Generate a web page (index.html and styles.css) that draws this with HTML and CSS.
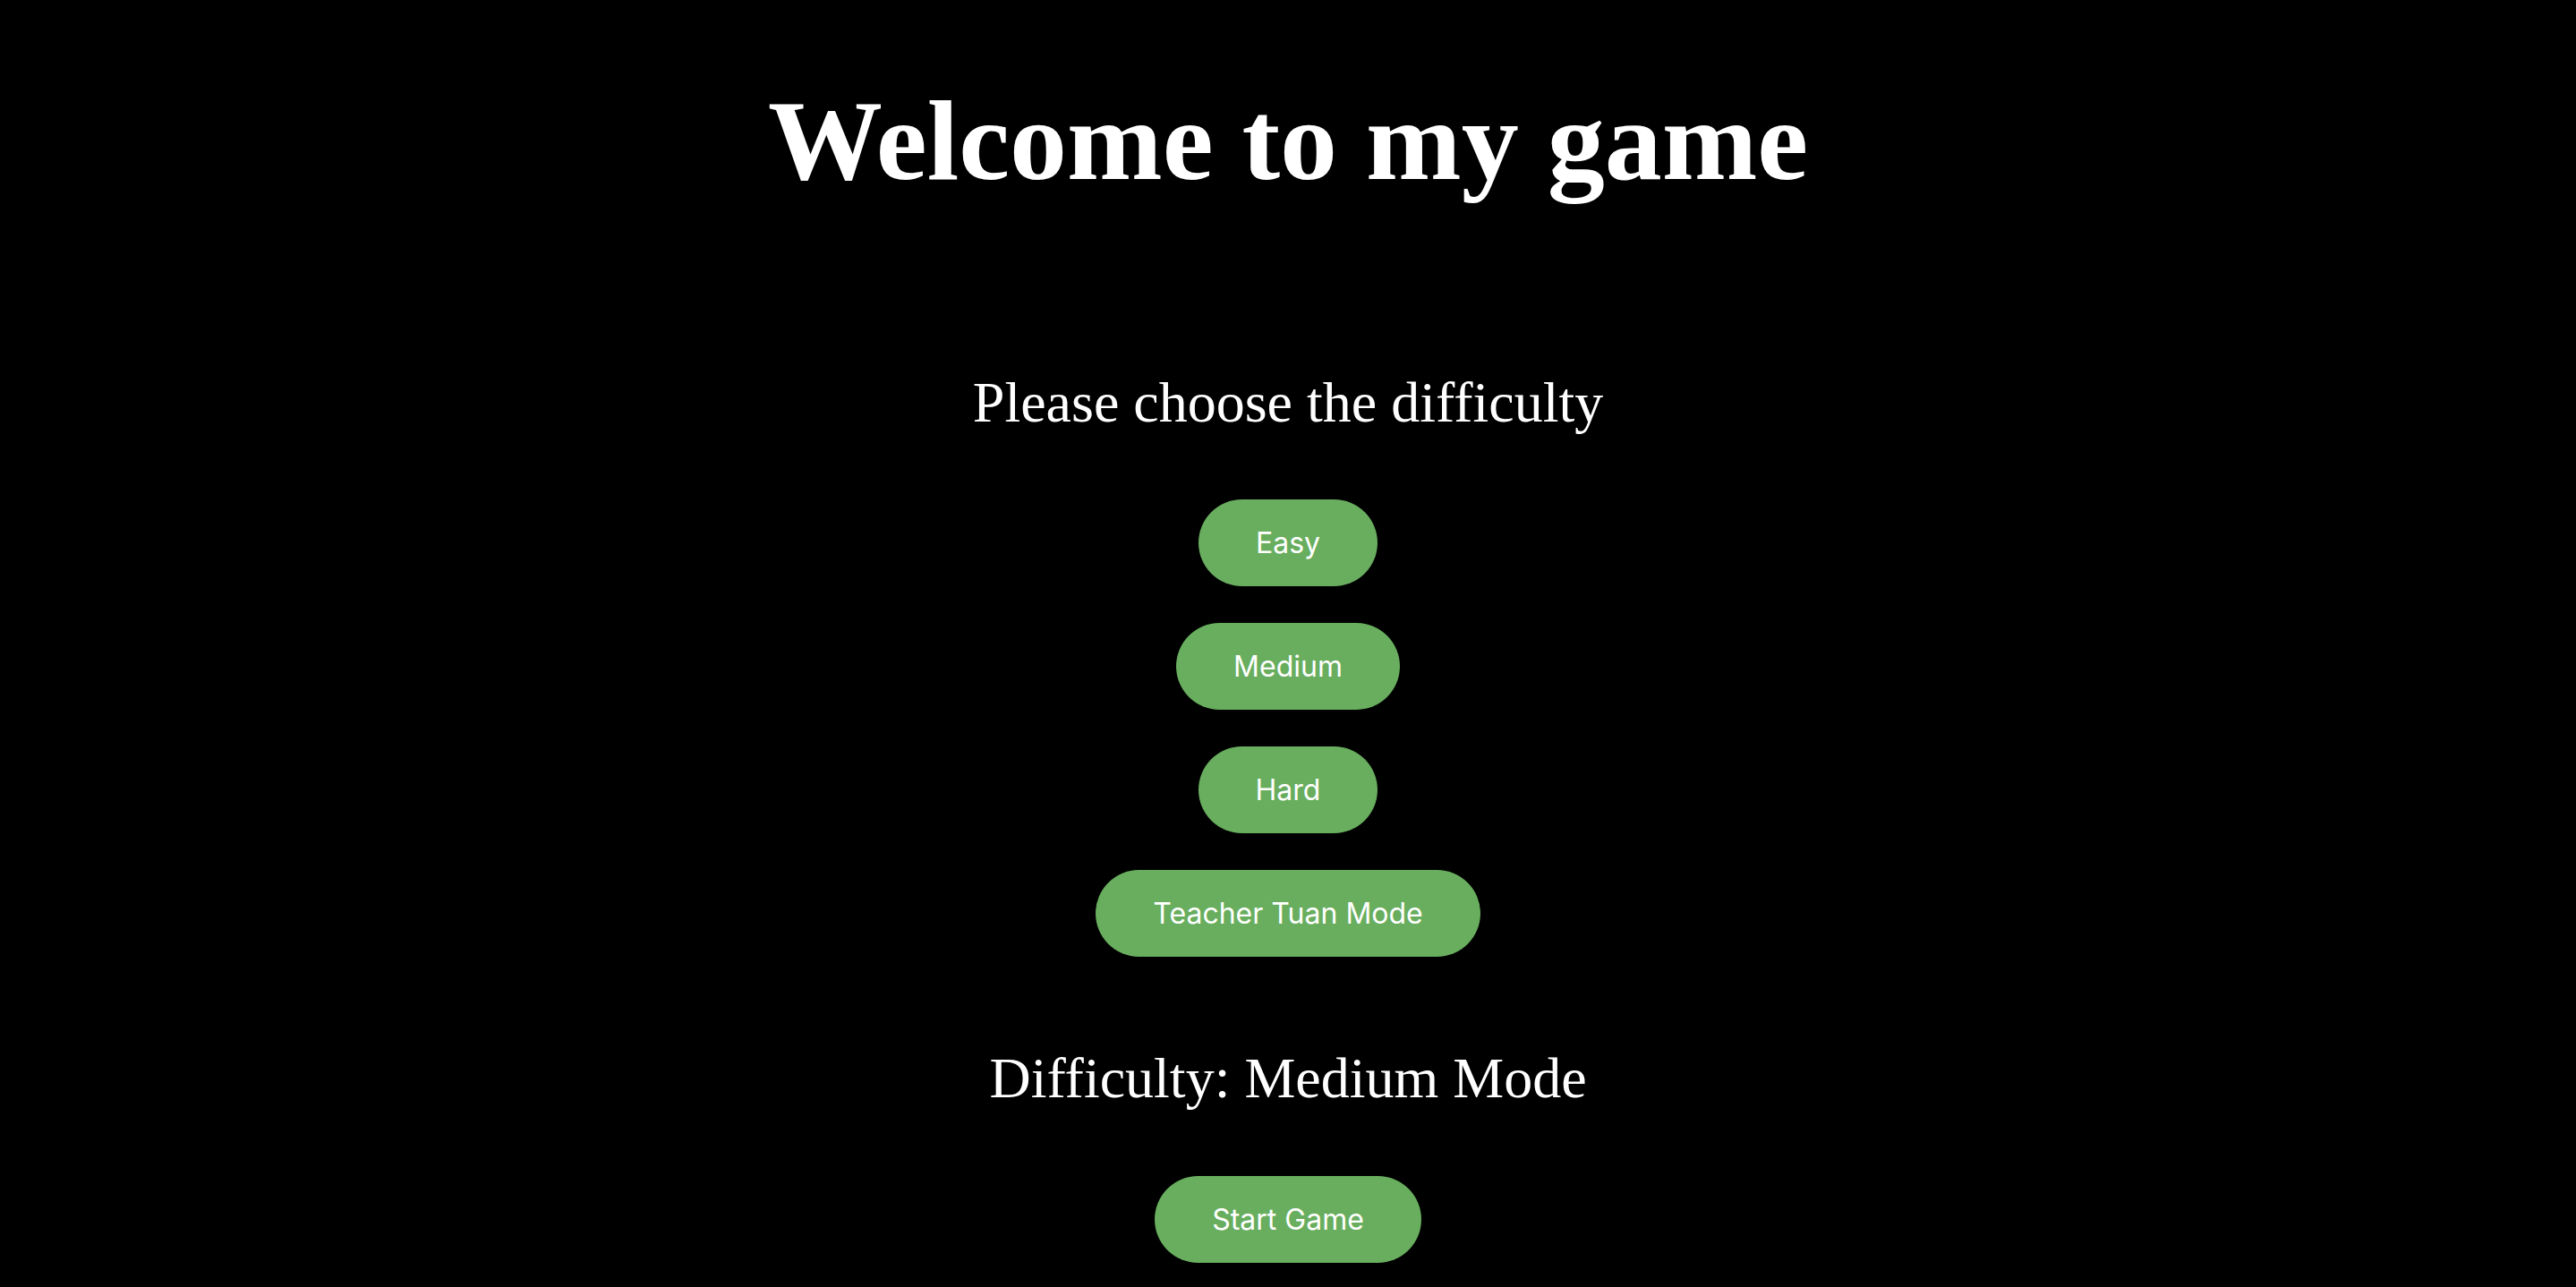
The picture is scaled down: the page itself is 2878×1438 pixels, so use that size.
FILE: index.html
```html
<!DOCTYPE html>
<html lang="en">
<head>
<meta charset="utf-8">
<title>Welcome to my game</title>
<link rel="stylesheet" href="styles.css">
</head>
<body>
<main class="page">
  <h1 class="title">Welcome to my game</h1>
  <p class="prompt">Please choose the difficulty</p>
  <div class="choices">
    <button class="pill">Easy</button>
    <button class="pill">Medium</button>
    <button class="pill">Hard</button>
    <button class="pill">Teacher Tuan Mode</button>
  </div>
  <p class="status">Difficulty: Medium Mode</p>
  <button class="pill start">Start Game</button>
</main>
</body>
</html>
```

FILE: styles.css
```css
html, body {
  margin: 0;
  padding: 0;
  background: #000;
  color: #fff;
}

.page {
  display: flex;
  flex-direction: column;
  align-items: center;
  min-height: 1438px;
  font-family: "Liberation Serif", "Times New Roman", serif;
}

.title {
  margin: 93px 0 0;
  font-size: 128px;
  line-height: 1;
  font-weight: bold;
}

.prompt {
  margin: 197px 0 0;
  font-size: 64px;
  line-height: 1;
}

.choices {
  margin-top: 76px;
  display: flex;
  flex-direction: column;
  align-items: center;
  gap: 41px;
}

.pill {
  display: inline-flex;
  align-items: center;
  justify-content: center;
  height: 97px;
  padding: 0 64px;
  border: none;
  border-radius: 999px;
  background: #68ae5e;
  color: #fff;
  font-family: Inter, "Noto Sans", sans-serif;
  font-size: 32px;
  line-height: 1;
  cursor: pointer;
}

.status {
  margin: 104px 0 0;
  font-size: 64px;
  line-height: 1;
}

.start {
  margin-top: 77px;
}
```
